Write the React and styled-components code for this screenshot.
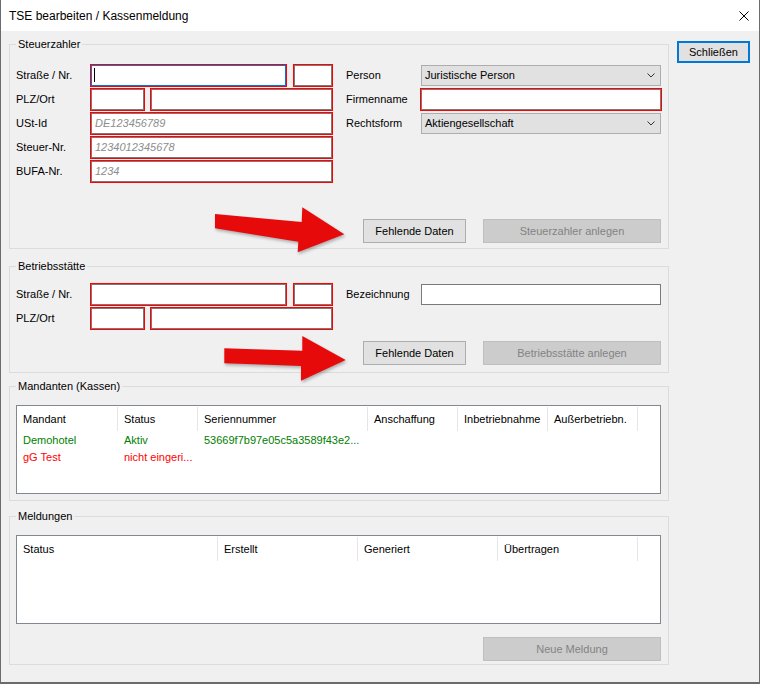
import React from "react";
import styled, { createGlobalStyle } from "styled-components";

const GlobalStyle = createGlobalStyle`
  html, body {
    margin: 0;
    padding: 0;
    background: #f0f0f0;
  }
  * {
    box-sizing: border-box;
  }
`;

const Window = styled.div`
  width: 760px;
  height: 684px;
  background: #f0f0f0;
  border: 1px solid #6b6b6b;
  border-top: none;
  border-bottom-width: 2px;
  font-family: "Liberation Sans", Arial, sans-serif;
  font-size: 11px;
  color: #000;
  overflow: hidden;
`;

const TitleBar = styled.div`
  height: 31px;
  background: #fff;
  display: flex;
  align-items: center;
  justify-content: space-between;
  padding: 0 10px 0 8px;
  font-size: 12px;
`;

const Body = styled.div`
  display: flex;
  align-items: flex-start;
  gap: 8px;
  padding: 10px 0 0 8px;
`;

const Main = styled.div`
  width: 660px;
  padding-top: 3px;
`;

const Group = styled.div`
  position: relative;
  border: 1px solid #dcdcdc;
  margin-top: ${(p) => p.$top || 0}px;
  padding: 0 7px ${(p) => p.$bottom || 0}px 6px;
`;

const Legend = styled.div`
  width: fit-content;
  height: 13px;
  line-height: 13px;
  margin-top: -7px;
  padding: 0 2px;
  background: #f0f0f0;
`;

const Form = styled.div`
  display: flex;
  gap: 14px;
  margin-top: ${(p) => p.$top}px;
`;

const Column = styled.div`
  display: flex;
  flex-direction: column;
  width: ${(p) => p.$w}px;
`;

const Row = styled.div`
  display: flex;
  align-items: center;
  height: 24px;
`;

const Label = styled.div`
  width: 75px;
  flex-shrink: 0;
  white-space: nowrap;
`;

const Fields = styled.div`
  display: flex;
  justify-content: space-between;
  width: 241px;
`;

const TextBox = styled.div`
  width: ${(p) => p.$w}px;
  height: 21px;
  background: #fff;
  border: 1px solid ${(p) => (p.$focused ? "#0078d7" : "#7a7a7a")};
  box-shadow: ${(p) => (p.$error ? "0 0 0 1px #ff0000" : "none")};
  display: flex;
  align-items: center;
  padding-left: 2px;
`;

const Hint = styled.span`
  font-style: italic;
  color: #8d8d8d;
  padding-left: 1px;
`;

const Caret = styled.span`
  width: 1px;
  height: 14px;
  background: #000;
`;

const Select = styled.div`
  width: 240px;
  height: 21px;
  background: #e1e1e1;
  border: 1px solid #adadad;
  display: flex;
  align-items: center;
  justify-content: space-between;
  padding: 0 5px 0 3px;
`;

const ButtonRow = styled.div`
  display: flex;
  justify-content: flex-end;
  gap: 17px;
  margin-top: ${(p) => p.$top}px;
`;

const Button = styled.button`
  width: ${(p) => p.$w}px;
  height: ${(p) => p.$h || 24}px;
  padding: 0;
  font: inherit;
  color: ${(p) => (p.disabled ? "#838383" : "#000")};
  background: ${(p) => (p.disabled ? "#cccccc" : "#e1e1e1")};
  border: ${(p) =>
    p.$primary ? "2px solid #0078d7" : p.disabled ? "1px solid #bfbfbf" : "1px solid #adadad"};
`;

const List = styled.div`
  margin-top: 12px;
  height: 89px;
  background: #fff;
  border: 1px solid #828790;
`;

const ListHead = styled.div`
  display: flex;
  height: 25px;
  padding-top: 1px;
`;

const HeadCell = styled.div`
  width: ${(p) => p.$w}px;
  border-right: 1px solid #e5e5e5;
  padding-left: 6px;
  display: flex;
  align-items: center;
  white-space: nowrap;
`;

const ListRow = styled.div`
  display: flex;
  align-items: center;
  height: 17px;
  color: ${(p) => p.$color};
`;

const Cell = styled.div`
  width: ${(p) => p.$w}px;
  padding-left: 6px;
  white-space: nowrap;
  overflow: hidden;
`;

const Arrow = styled.svg`
  position: absolute;
  left: ${(p) => p.$x}px;
  top: ${(p) => p.$y}px;
  filter: drop-shadow(1px 2px 1.5px rgba(0, 0, 0, 0.28));
  pointer-events: none;
`;

const Chevron = () => (
  <svg width="8" height="5" viewBox="0 0 8 5">
    <path d="M0.5 0.5 L4 4 L7.5 0.5" fill="none" stroke="#333" strokeWidth="1" />
  </svg>
);

const CloseIcon = () => (
  <svg width="10" height="10" viewBox="0 0 10 10">
    <path d="M0.5 0.5 L9.5 9.5 M9.5 0.5 L0.5 9.5" stroke="#000" strokeWidth="1" />
  </svg>
);

const mandantCols = [
  ["Mandant", 101],
  ["Status", 80],
  ["Seriennummer", 170],
  ["Anschaffung", 90],
  ["Inbetriebnahme", 90],
  ["Außerbetriebn.", 90],
];

const mandanten = [
  { color: "#008000", cells: ["Demohotel", "Aktiv", "53669f7b97e05c5a3589f43e2..."] },
  { color: "#ff0000", cells: ["gG Test", "nicht eingeri...", ""] },
];

const meldungCols = [
  ["Status", 201],
  ["Erstellt", 140],
  ["Generiert", 140],
  ["Übertragen", 140],
];

export default function App() {
  return (
    <>
      <GlobalStyle />
      <Window>
        <TitleBar>
          <span>TSE bearbeiten / Kassenmeldung</span>
          <CloseIcon />
        </TitleBar>
        <Body>
          <Main>
            <Group $bottom={5}>
              <Legend>Steuerzahler</Legend>
              <Form $top={12}>
                <Column $w={316}>
                  <Row>
                    <Label>Straße / Nr.</Label>
                    <Fields>
                      <TextBox $w={195} $error $focused>
                        <Caret />
                      </TextBox>
                      <TextBox $w={38} $error />
                    </Fields>
                  </Row>
                  <Row>
                    <Label>PLZ/Ort</Label>
                    <Fields>
                      <TextBox $w={53} $error />
                      <TextBox $w={181} $error />
                    </Fields>
                  </Row>
                  <Row>
                    <Label>USt-Id</Label>
                    <TextBox $w={241} $error>
                      <Hint>DE123456789</Hint>
                    </TextBox>
                  </Row>
                  <Row>
                    <Label>Steuer-Nr.</Label>
                    <TextBox $w={241} $error>
                      <Hint>1234012345678</Hint>
                    </TextBox>
                  </Row>
                  <Row>
                    <Label>BUFA-Nr.</Label>
                    <TextBox $w={241} $error>
                      <Hint>1234</Hint>
                    </TextBox>
                  </Row>
                </Column>
                <Column $w={315}>
                  <Row>
                    <Label>Person</Label>
                    <Select>
                      <span>Juristische Person</span>
                      <Chevron />
                    </Select>
                  </Row>
                  <Row>
                    <Label>Firmenname</Label>
                    <TextBox $w={240} $error />
                  </Row>
                  <Row>
                    <Label>Rechtsform</Label>
                    <Select>
                      <span>Aktiengesellschaft</span>
                      <Chevron />
                    </Select>
                  </Row>
                </Column>
              </Form>
              <ButtonRow $top={36}>
                <Button $w={103}>Fehlende Daten</Button>
                <Button $w={178} disabled>
                  Steuerzahler anlegen
                </Button>
              </ButtonRow>
              <Arrow $x={200} $y={157} width="145" height="60" viewBox="0 0 145 60">
                <polygon
                  points="5,12 91.7,20 92.3,5.3 134.3,32.3 87.7,50.3 88.3,39.7 5,26.3"
                  fill="#e60a0a"
                />
              </Arrow>
            </Group>

            <Group $top={17} $bottom={7}>
              <Legend>Betriebsstätte</Legend>
              <Form $top={9}>
                <Column $w={316}>
                  <Row>
                    <Label>Straße / Nr.</Label>
                    <Fields>
                      <TextBox $w={195} $error />
                      <TextBox $w={38} $error />
                    </Fields>
                  </Row>
                  <Row>
                    <Label>PLZ/Ort</Label>
                    <Fields>
                      <TextBox $w={53} $error />
                      <TextBox $w={181} $error />
                    </Fields>
                  </Row>
                </Column>
                <Column $w={315}>
                  <Row>
                    <Label>Bezeichnung</Label>
                    <TextBox $w={240} />
                  </Row>
                </Column>
              </Form>
              <ButtonRow $top={11}>
                <Button $w={103}>Fehlende Daten</Button>
                <Button $w={178} disabled>
                  Betriebsstätte anlegen
                </Button>
              </ButtonRow>
              <Arrow $x={208} $y={63} width="140" height="58" viewBox="0 0 140 58">
                <polygon
                  points="6.3,18.3 84.3,20.7 84.3,6 127.7,30 83,50.7 83,36 6.3,33.3"
                  fill="#e60a0a"
                />
              </Arrow>
            </Group>

            <Group $top={13} $bottom={6}>
              <Legend>Mandanten (Kassen)</Legend>
              <List>
                <ListHead>
                  {mandantCols.map(([name, w]) => (
                    <HeadCell key={name} $w={w}>
                      {name}
                    </HeadCell>
                  ))}
                </ListHead>
                {mandanten.map((row, i) => (
                  <ListRow key={i} $color={row.color}>
                    {row.cells.map((c, j) => (
                      <Cell key={j} $w={mandantCols[j][1]}>
                        {c}
                      </Cell>
                    ))}
                  </ListRow>
                ))}
              </List>
            </Group>

            <Group $top={15} $bottom={3}>
              <Legend>Meldungen</Legend>
              <List>
                <ListHead>
                  {meldungCols.map(([name, w]) => (
                    <HeadCell key={name} $w={w}>
                      {name}
                    </HeadCell>
                  ))}
                </ListHead>
              </List>
              <ButtonRow $top={13}>
                <Button $w={178} disabled>
                  Neue Meldung
                </Button>
              </ButtonRow>
            </Group>
          </Main>
          <Button $w={73} $h={22} $primary>
            Schließen
          </Button>
        </Body>
      </Window>
    </>
  );
}
